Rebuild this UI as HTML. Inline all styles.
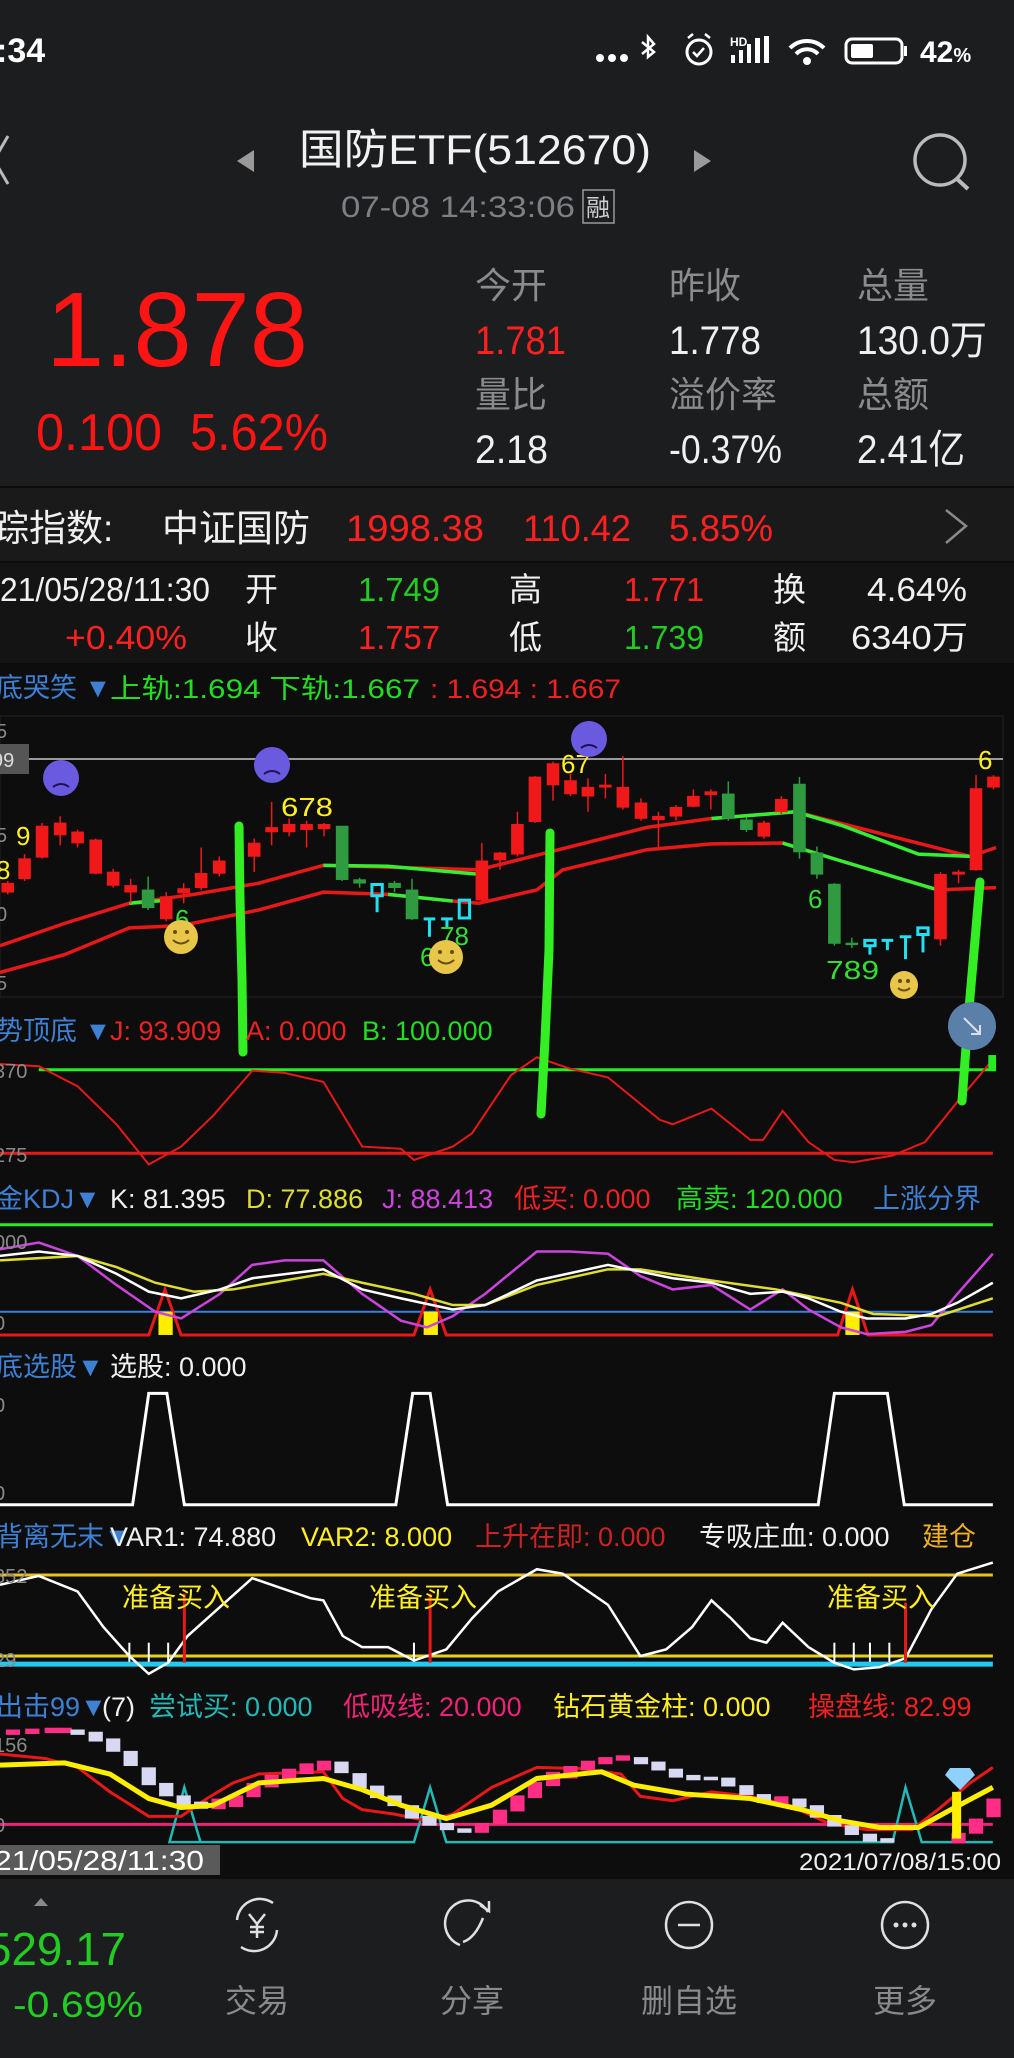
<!DOCTYPE html>
<html><head><meta charset="utf-8"><style>
html,body{margin:0;padding:0;background:#0d0d0d;}
svg{display:block;font-family:"Liberation Sans","Noto Sans CJK SC",sans-serif;}
.n{vector-effect:non-scaling-stroke;fill:none}
</style></head><body>
<svg width="1014" height="2058" viewBox="0 0 1014 2058" xmlns="http://www.w3.org/2000/svg">
<!-- backgrounds -->
<rect x="0" y="0" width="1014" height="488" fill="#1c1d1f"/>
<rect x="0" y="488" width="1014" height="74" fill="#1a1a1b"/>
<rect x="0" y="486" width="1014" height="2" fill="#0c0c0c"/>
<rect x="0" y="561" width="1014" height="2" fill="#0c0c0c"/>
<rect x="0" y="563" width="1014" height="100" fill="#141414"/>
<rect x="0" y="663" width="1014" height="1216" fill="#0d0d0d"/>
<rect x="0" y="1879" width="1014" height="179" fill="#1c1d1f"/>

<!-- status bar -->
<text x="-4" y="62" font-size="34" font-weight="bold" fill="#fff">:34</text>
<g fill="#fff"><circle cx="600" cy="58" r="4"/><circle cx="612" cy="58" r="4"/><circle cx="624" cy="58" r="4"/></g>
<path d="M642 42 L654 52 L648 57 L648 37 L654 44 L642 54" stroke="#fff" stroke-width="2.5" fill="none"/>
<circle cx="699" cy="52" r="12" stroke="#fff" stroke-width="3" fill="none"/>
<path d="M693 52 l4 4 l7-8 M688 38 l5-4 M710 38 l-5-4" stroke="#fff" stroke-width="2.5" fill="none"/>
<text x="730" y="46" font-size="12" font-weight="bold" fill="#fff">HD</text>
<g fill="#fff"><rect x="731" y="55" width="4" height="8"/><rect x="739" y="50" width="4" height="13"/><rect x="747" y="44" width="4" height="19"/><rect x="755" y="38" width="5" height="25"/><rect x="764" y="36" width="5" height="27"/></g>
<path d="M790 48 a24 24 0 0 1 34 0 M796 54 a15 15 0 0 1 22 0" stroke="#fff" stroke-width="4" fill="none"/>
<circle cx="807" cy="61" r="4" fill="#fff"/>
<rect x="846" y="39" width="56" height="24" rx="6" stroke="#fff" stroke-width="3" fill="none"/>
<rect x="851" y="44" width="22" height="14" rx="2" fill="#fff"/>
<rect x="904" y="46" width="3" height="10" fill="#fff"/>
<text x="920" y="62" font-size="30" font-weight="bold" fill="#fff">42<tspan font-size="20">%</tspan></text>

<!-- title -->
<path d="M8 136 L-6 160 L8 184" stroke="#bbb" stroke-width="3" fill="none"/>
<path d="M254 150 L237 161 L254 172 Z" fill="#9a9a9a"/>
<path d="M694 150 L711 161 L694 172 Z" fill="#9a9a9a"/>
<text x="299" y="164" font-size="42" fill="#f2f2f2" textLength="352" lengthAdjust="spacingAndGlyphs">国防ETF(512670)</text>
<circle cx="940" cy="160" r="25" stroke="#bbb" stroke-width="3.5" fill="none"/>
<path d="M956 178 L968 189" stroke="#bbb" stroke-width="4"/>
<text x="341" y="217" font-size="30" fill="#7c7f84" textLength="234" lengthAdjust="spacingAndGlyphs">07-08 14:33:06</text>
<rect x="583" y="190" width="31" height="33" fill="none" stroke="#9a9a9a" stroke-width="1.5"/>
<text x="586" y="216" font-size="24" fill="#cfcfcf">融</text>

<!-- price -->
<text x="46" y="366" font-size="106" fill="#ff1414" textLength="262" lengthAdjust="spacingAndGlyphs">1.878</text>
<text x="36" y="450" font-size="52" fill="#ff1414" textLength="126" lengthAdjust="spacingAndGlyphs">0.100</text>
<text x="190" y="450" font-size="52" fill="#ff1414" textLength="138" lengthAdjust="spacingAndGlyphs">5.62%</text>
<g font-size="36" fill="#8a8b8d">
<text x="475" y="298">今开</text><text x="669" y="298">昨收</text><text x="857" y="298">总量</text>
<text x="475" y="407">量比</text><text x="669" y="407">溢价率</text><text x="857" y="407">总额</text>
</g>
<g font-size="40">
<text x="475" y="354" fill="#ff2020" textLength="91" lengthAdjust="spacingAndGlyphs">1.781</text>
<text x="669" y="354" fill="#f0f0f0" textLength="92" lengthAdjust="spacingAndGlyphs">1.778</text>
<text x="857" y="354" fill="#f0f0f0" textLength="130" lengthAdjust="spacingAndGlyphs">130.0万</text>
<text x="475" y="463" fill="#f0f0f0" textLength="73" lengthAdjust="spacingAndGlyphs">2.18</text>
<text x="669" y="463" fill="#f0f0f0" textLength="113" lengthAdjust="spacingAndGlyphs">-0.37%</text>
<text x="857" y="463" fill="#f0f0f0" textLength="108" lengthAdjust="spacingAndGlyphs">2.41亿</text>
</g>

<!-- tracking row -->
<g font-size="37">
<text x="-8" y="541" fill="#f0f0f0">踪指数:</text>
<text x="162" y="541" fill="#f0f0f0">中证国防</text>
<text x="346" y="541" fill="#ff2020" textLength="138" lengthAdjust="spacingAndGlyphs">1998.38</text>
<text x="523" y="541" fill="#ff2020" textLength="108" lengthAdjust="spacingAndGlyphs">110.42</text>
<text x="669" y="541" fill="#ff2020" textLength="104" lengthAdjust="spacingAndGlyphs">5.85%</text>
</g>
<path d="M946 510 L966 526 L946 543" stroke="#8a8a8a" stroke-width="2.5" fill="none"/>

<!-- K info row -->
<g font-size="33">
<text x="0" y="601" fill="#f0f0f0" textLength="210" lengthAdjust="spacingAndGlyphs">21/05/28/11:30</text>
<text x="245" y="601" fill="#f0f0f0">开</text>
<text x="358" y="601" fill="#22cc22" textLength="82" lengthAdjust="spacingAndGlyphs">1.749</text>
<text x="509" y="601" fill="#f0f0f0">高</text>
<text x="624" y="601" fill="#ff2020" textLength="80" lengthAdjust="spacingAndGlyphs">1.771</text>
<text x="773" y="601" fill="#f0f0f0">换</text>
<text x="867" y="601" fill="#f0f0f0" textLength="100" lengthAdjust="spacingAndGlyphs">4.64%</text>
<text x="65" y="649" fill="#ff2020" textLength="122" lengthAdjust="spacingAndGlyphs">+0.40%</text>
<text x="245" y="649" fill="#f0f0f0">收</text>
<text x="358" y="649" fill="#ff2020" textLength="82" lengthAdjust="spacingAndGlyphs">1.757</text>
<text x="509" y="649" fill="#f0f0f0">低</text>
<text x="624" y="649" fill="#22cc22" textLength="80" lengthAdjust="spacingAndGlyphs">1.739</text>
<text x="773" y="649" fill="#f0f0f0">额</text>
<text x="851" y="649" fill="#f0f0f0" textLength="117" lengthAdjust="spacingAndGlyphs">6340万</text>
</g>

<!-- indicator 1 header -->
<g font-size="27">
<text x="-4" y="697" fill="#3d80d4">底哭笑 ▼</text>
<text x="110" y="698" fill="#22dd22" textLength="310" lengthAdjust="spacingAndGlyphs">上轨:1.694 下轨:1.667</text>
<text x="430" y="698" fill="#ee2222" textLength="191" lengthAdjust="spacingAndGlyphs">: 1.694 : 1.667</text>
</g>
<rect x="0" y="716" width="1003" height="281" fill="none" stroke="#222" stroke-width="1"/>
<line x1="0" y1="759" x2="1003" y2="759" stroke="#9a9a9a" stroke-width="2"/>
<rect x="0" y="744" width="29" height="30" fill="#555"/>
<g font-size="20" fill="#8a8a8a">
<text x="-4" y="738">5</text><text x="-4" y="842">5</text><text x="-4" y="921">0</text><text x="-4" y="990">5</text>
<text x="-8" y="767" fill="#ddd">99</text>
</g>
<!-- main chart (zoom2 coords) -->
<g transform="translate(0,660) scale(0.6468,0.4464)">
<g stroke-width="3.5">
<polyline class="n" stroke="#e81818" points="0,640 100,590 200,545 300,525 400,500 500,460 740,470 850,430 1000,375 1100,355 1230,340 1500,440 1540,420"/>
<polyline class="n" stroke="#e81818" points="0,700 100,660 200,600 280,595 400,560 500,520 600,525 700,540 740,545 830,515 870,470 1000,425 1100,412 1210,410 1300,450 1450,515 1540,510"/>
<polyline class="n" stroke="#33ee33" points="200,545 260,538"/>
<polyline class="n" stroke="#33ee33" points="500,460 600,462 700,475 740,480"/>
<polyline class="n" stroke="#33ee33" points="600,525 700,540"/>
<polyline class="n" stroke="#33ee33" points="1100,355 1230,340 1300,370 1420,435 1500,440"/>
<polyline class="n" stroke="#33ee33" points="1210,410 1300,450 1450,515"/>
</g>
<g stroke-width="1.5">
<!-- candles: x, bodyTop, bodyBot, wickTop, wickBot -->
<g fill="#f01818" stroke="#f01818">
<line class="n" x1="12" y1="495" x2="12" y2="525"/><rect x="3" y="500" width="18" height="20"/>
<line class="n" x1="38" y1="435" x2="38" y2="495"/><rect x="29" y="445" width="18" height="45"/>
<line class="n" x1="65" y1="365" x2="65" y2="445"/><rect x="56" y="372" width="18" height="70"/>
<line class="n" x1="93" y1="350" x2="93" y2="415"/><rect x="84" y="365" width="18" height="27"/>
<line class="n" x1="120" y1="380" x2="120" y2="420"/><rect x="111" y="385" width="18" height="25"/>
<line class="n" x1="148" y1="400" x2="148" y2="480"/><rect x="139" y="403" width="18" height="75"/>
<line class="n" x1="175" y1="468" x2="175" y2="510"/><rect x="166" y="475" width="18" height="30"/>
<line class="n" x1="202" y1="490" x2="202" y2="545"/><rect x="193" y="505" width="18" height="15"/>
<line class="n" x1="257" y1="520" x2="257" y2="585"/><rect x="248" y="530" width="18" height="50"/>
<line class="n" x1="284" y1="500" x2="284" y2="545"/><rect x="275" y="512" width="18" height="10"/>
<line class="n" x1="311" y1="420" x2="311" y2="515"/><rect x="302" y="478" width="18" height="32"/>
<line class="n" x1="339" y1="440" x2="339" y2="485"/><rect x="330" y="450" width="18" height="28"/>
<line class="n" x1="393" y1="400" x2="393" y2="475"/><rect x="384" y="410" width="18" height="30"/>
<line class="n" x1="420" y1="318" x2="420" y2="415"/><rect x="411" y="375" width="18" height="10"/>
<line class="n" x1="447" y1="355" x2="447" y2="395"/><rect x="438" y="368" width="18" height="17"/>
<line class="n" x1="474" y1="360" x2="474" y2="420"/><rect x="465" y="368" width="18" height="12"/>
<line class="n" x1="501" y1="365" x2="501" y2="395"/><rect x="492" y="368" width="18" height="10"/>
<line class="n" x1="745" y1="410" x2="745" y2="540"/><rect x="736" y="450" width="18" height="88"/>
<line class="n" x1="773" y1="430" x2="773" y2="470"/><rect x="764" y="432" width="18" height="16"/>
<line class="n" x1="800" y1="340" x2="800" y2="440"/><rect x="791" y="368" width="18" height="67"/>
<line class="n" x1="827" y1="260" x2="827" y2="365"/><rect x="818" y="262" width="18" height="100"/>
<line class="n" x1="855" y1="228" x2="855" y2="315"/><rect x="846" y="232" width="18" height="48"/>
<line class="n" x1="882" y1="255" x2="882" y2="305"/><rect x="873" y="270" width="18" height="30"/>
<line class="n" x1="909" y1="265" x2="909" y2="340"/><rect x="900" y="285" width="18" height="20"/>
<line class="n" x1="936" y1="255" x2="936" y2="310"/><rect x="927" y="280" width="18" height="5"/>
<line class="n" x1="963" y1="215" x2="963" y2="335"/><rect x="954" y="285" width="18" height="45"/>
<line class="n" x1="991" y1="310" x2="991" y2="360"/><rect x="982" y="320" width="18" height="35"/>
<line class="n" x1="1018" y1="340" x2="1018" y2="420"/><rect x="1009" y="350" width="18" height="8"/>
<line class="n" x1="1045" y1="325" x2="1045" y2="360"/><rect x="1036" y="330" width="18" height="20"/>
<line class="n" x1="1072" y1="290" x2="1072" y2="330"/><rect x="1063" y="305" width="18" height="23"/>
<line class="n" x1="1099" y1="290" x2="1099" y2="335"/><rect x="1090" y="295" width="18" height="7"/>
<line class="n" x1="1181" y1="360" x2="1181" y2="400"/><rect x="1172" y="365" width="18" height="30"/>
<line class="n" x1="1208" y1="305" x2="1208" y2="345"/><rect x="1199" y="312" width="18" height="28"/>
<line class="n" x1="1454" y1="475" x2="1454" y2="640"/><rect x="1445" y="480" width="18" height="145"/>
<line class="n" x1="1482" y1="470" x2="1482" y2="500"/><rect x="1473" y="475" width="18" height="5"/>
<line class="n" x1="1509" y1="258" x2="1509" y2="472"/><rect x="1500" y="288" width="18" height="182"/>
<line class="n" x1="1536" y1="258" x2="1536" y2="290"/><rect x="1527" y="262" width="18" height="23"/>
</g>
<g fill="#2f9a3f" stroke="#2f9a3f">
<line class="n" x1="229" y1="485" x2="229" y2="560"/><rect x="220" y="515" width="18" height="40"/>
<line class="n" x1="529" y1="372" x2="529" y2="495"/><rect x="520" y="372" width="18" height="120"/>
<line class="n" x1="556" y1="488" x2="556" y2="510"/><rect x="547" y="492" width="18" height="8"/>
<line class="n" x1="610" y1="495" x2="610" y2="520"/><rect x="601" y="500" width="18" height="10"/>
<line class="n" x1="637" y1="490" x2="637" y2="582"/><rect x="628" y="515" width="18" height="65"/>
<line class="n" x1="1126" y1="272" x2="1126" y2="360"/><rect x="1117" y="300" width="18" height="55"/>
<line class="n" x1="1154" y1="352" x2="1154" y2="385"/><rect x="1145" y="358" width="18" height="22"/>
<line class="n" x1="1236" y1="262" x2="1236" y2="445"/><rect x="1227" y="278" width="18" height="152"/>
<line class="n" x1="1263" y1="418" x2="1263" y2="490"/><rect x="1254" y="432" width="18" height="48"/>
<line class="n" x1="1290" y1="500" x2="1290" y2="640"/><rect x="1281" y="502" width="18" height="133"/>
<line class="n" x1="1317" y1="622" x2="1317" y2="645"/><rect x="1308" y="634" width="18" height="4"/>
</g>
<g stroke="#22e0f0" fill="none" stroke-width="3">
<line class="n" x1="583" y1="528" x2="583" y2="565"/><rect class="n" x="575" y="503" width="16" height="25"/>
<line class="n" x1="664" y1="578" x2="664" y2="620"/><line class="n" x1="655" y1="580" x2="673" y2="580"/>
<line class="n" x1="691" y1="580" x2="691" y2="600"/><line class="n" x1="682" y1="580" x2="700" y2="580"/>
<rect class="n" x="710" y="538" width="16" height="40"/>
<line class="n" x1="1345" y1="640" x2="1345" y2="660"/><rect class="n" x="1337" y="628" width="16" height="12"/>
<line class="n" x1="1372" y1="628" x2="1372" y2="650"/><line class="n" x1="1363" y1="628" x2="1381" y2="628"/>
<line class="n" x1="1400" y1="620" x2="1400" y2="670"/><line class="n" x1="1391" y1="620" x2="1409" y2="620"/>
<line class="n" x1="1427" y1="615" x2="1427" y2="655"/><rect class="n" x="1419" y="600" width="16" height="15"/>
</g>
</g>
<!-- J line chart2 -->
<line class="n" x1="60" y1="918" x2="1540" y2="918" stroke="#22ee22" stroke-width="3"/>
<line class="n" x1="0" y1="1105" x2="1535" y2="1105" stroke="#e81818" stroke-width="3"/>
<polyline class="n" stroke="#e81818" stroke-width="2" points="0,905 60,910 120,955 180,1040 230,1130 280,1090 330,1020 390,920 440,925 500,945 560,1090 620,1095 640,1120 700,1090 730,1060 790,930 830,890 880,915 940,935 1020,1030 1040,1040 1100,1005 1160,1075 1180,1075 1210,1010 1250,1080 1290,1120 1320,1125 1380,1110 1430,1080 1480,990 1535,895"/>
<rect x="1528" y="885" width="12" height="35" fill="#22ee22"/>
<!-- KDJ -->
<line class="n" x1="0" y1="1265" x2="1535" y2="1265" stroke="#22ee22" stroke-width="3"/>
<line class="n" x1="0" y1="1460" x2="1535" y2="1460" stroke="#3a7fe0" stroke-width="2"/>
<polyline class="n" stroke="#e81818" stroke-width="3" points="0,1512 230,1512 255,1410 280,1512 640,1512 665,1410 690,1512 1295,1512 1318,1410 1342,1512 1535,1512"/>
<g fill="#ffee00"><rect x="245" y="1460" width="22" height="52"/><rect x="655" y="1460" width="22" height="52"/><rect x="1307" y="1460" width="22" height="52"/></g>
<polyline class="n" stroke="#cc44dd" stroke-width="2.5" points="0,1320 60,1305 120,1335 180,1400 240,1460 280,1475 340,1420 390,1355 440,1345 500,1345 560,1420 620,1480 660,1495 700,1470 750,1420 830,1325 880,1325 940,1330 990,1380 1040,1410 1100,1400 1160,1455 1210,1410 1250,1455 1300,1495 1340,1510 1400,1505 1440,1490 1480,1420 1535,1330"/>
<polyline class="n" stroke="#dddd33" stroke-width="2.5" points="0,1345 120,1335 180,1360 240,1395 300,1415 360,1410 440,1390 500,1375 560,1395 640,1420 700,1445 750,1445 830,1400 940,1365 990,1365 1100,1390 1200,1410 1300,1440 1350,1465 1450,1470 1535,1430"/>
<polyline class="n" stroke="#ffffff" stroke-width="2.5" points="0,1335 60,1325 120,1335 180,1375 230,1415 280,1430 340,1410 390,1385 500,1365 560,1410 620,1430 700,1455 750,1445 830,1390 940,1355 990,1370 1040,1385 1100,1395 1160,1420 1210,1415 1250,1430 1300,1460 1340,1475 1400,1475 1440,1465 1480,1440 1535,1395"/>
</g>
<!-- hand-drawn green strokes -->
<g stroke="#33ee22" stroke-width="9" stroke-linecap="round" fill="none">
<path d="M239 826 L240 900 L242 980 L243 1052"/>
<path d="M550 833 L549 950 L545 1040 L541 1114"/>
<path d="M980 882 L975 940 L968 1020 L962 1101"/>
</g>
<!-- chart1 labels and faces -->
<g font-size="26" fill="#ffee22">
<text x="16" y="845">9</text><text x="-4" y="879">8</text>
<text x="281" y="816" textLength="52" lengthAdjust="spacingAndGlyphs">678</text>
<text x="561" y="773">67</text><text x="978" y="769">6</text>
</g>
<g font-size="26" fill="#33dd33">
<text x="175" y="928">6</text><text x="440" y="945">78</text><text x="420" y="966">6</text>
<text x="808" y="908">6</text><text x="826" y="979" textLength="53" lengthAdjust="spacingAndGlyphs">789</text>
</g>
<g>
<circle cx="181" cy="937" r="17" fill="#e8c64a"/><circle cx="446" cy="957" r="17" fill="#e8c64a"/><circle cx="904" cy="985" r="14" fill="#e8c64a"/>
<g stroke="#6b4a10" stroke-width="2" fill="none"><path d="M173 940 q8 7 16 0"/><path d="M438 960 q8 7 16 0"/><path d="M898 988 q6 5 12 0"/></g>
<g fill="#6b4a10"><circle cx="175" cy="932" r="2"/><circle cx="187" cy="932" r="2"/><circle cx="440" cy="952" r="2"/><circle cx="452" cy="952" r="2"/><circle cx="900" cy="981" r="2"/><circle cx="908" cy="981" r="2"/></g>
<circle cx="61" cy="778" r="18" fill="#6a5adf"/><circle cx="272" cy="765" r="18" fill="#6a5adf"/><circle cx="589" cy="739" r="18" fill="#6a5adf"/>
<g stroke="#201050" stroke-width="2" fill="none"><path d="M53 787 q8 -6 16 0"/><path d="M264 774 q8 -6 16 0"/><path d="M581 748 q8 -6 16 0"/></g>
</g>
<circle cx="972" cy="1026" r="24" fill="#5a80aa"/>
<path d="M964 1018 L980 1034 M980 1025 L980 1034 L971 1034" stroke="#dde" stroke-width="2" fill="none"/>

<!-- indicator 2 -->
<g font-size="27">
<text x="-4" y="1040" fill="#3d80d4">势顶底 ▼</text>
<text x="110" y="1040" fill="#ee2222">J: 93.909</text>
<text x="246" y="1040" fill="#ee2222">A: 0.000</text>
<text x="362" y="1040" fill="#22dd22">B: 100.000</text>
</g>
<g font-size="20" fill="#8a8a8a"><text x="-6" y="1078">370</text><text x="-6" y="1162">275</text><text x="-6" y="1249">000</text><text x="-6" y="1330">0</text></g>
<g font-size="27">
<text x="-4" y="1208" fill="#3d80d4">金KDJ▼</text>
<text x="110" y="1208" fill="#f0f0f0">K: 81.395</text>
<text x="246" y="1208" fill="#dddd33">D: 77.886</text>
<text x="382" y="1208" fill="#cc44dd">J: 88.413</text>
<text x="514" y="1208" fill="#ee2222">低买: 0.000</text>
<text x="676" y="1208" fill="#22dd22">高卖: 120.000</text>
<text x="873" y="1208" fill="#3d80d4">上涨分界</text>
</g>
<g font-size="27">
<text x="-4" y="1376" fill="#3d80d4">底选股▼</text>
<text x="110" y="1376" fill="#f0f0f0">选股: 0.000</text>
</g>
<g transform="translate(0,1360) scale(0.6468,0.4452)">
<polyline class="n" stroke="#fff" stroke-width="3" points="0,325 205,325 230,75 258,75 285,325 612,325 638,75 665,75 692,325 1265,325 1290,75 1372,75 1398,325 1535,325"/>
<line class="n" x1="0" y1="483" x2="1535" y2="483" stroke="#e8c020" stroke-width="3"/>
<line class="n" x1="0" y1="665" x2="1535" y2="665" stroke="#e8d020" stroke-width="3"/>
<line class="n" x1="0" y1="683" x2="1535" y2="683" stroke="#22c8f0" stroke-width="5"/>
<polyline class="n" stroke="#fff" stroke-width="2.5" points="0,505 60,485 120,520 160,600 200,665 230,705 260,680 290,620 340,555 390,490 430,510 480,535 500,540 530,620 560,645 600,645 640,675 690,650 730,580 770,520 830,470 870,480 910,520 940,550 990,665 1030,650 1070,600 1100,540 1130,580 1160,625 1185,635 1210,590 1250,645 1290,680 1320,695 1360,690 1400,670 1440,560 1480,480 1535,455"/>
<g stroke="#e81818" stroke-width="3"><line class="n" x1="285" y1="525" x2="285" y2="680"/><line class="n" x1="665" y1="525" x2="665" y2="680"/><line class="n" x1="1400" y1="545" x2="1400" y2="680"/></g>
<g stroke="#fff" stroke-width="2"><line class="n" x1="200" y1="635" x2="200" y2="678"/><line class="n" x1="230" y1="635" x2="230" y2="678"/><line class="n" x1="260" y1="635" x2="260" y2="678"/><line class="n" x1="640" y1="635" x2="640" y2="678"/><line class="n" x1="1290" y1="635" x2="1290" y2="678"/><line class="n" x1="1320" y1="635" x2="1320" y2="678"/><line class="n" x1="1345" y1="635" x2="1345" y2="678"/><line class="n" x1="1375" y1="635" x2="1375" y2="678"/></g>
<!-- chart6 -->
<line class="n" x1="0" y1="1043" x2="1535" y2="1043" stroke="#ee2277" stroke-width="3"/>
<polyline class="n" stroke="#22b8b8" stroke-width="2.5" points="340,1083 262,1083 285,960 310,1083 640,1083 665,960 690,1083 1380,1083 1400,960 1425,1083 1535,1083"/>
<polyline class="n" stroke="#e81818" stroke-width="3" points="0,885 70,895 120,915 170,970 230,1025 280,1025 320,985 360,950 400,930 500,925 530,985 560,1010 610,1020 660,1035 700,1020 760,960 830,915 900,918 960,930 990,980 1040,990 1100,970 1160,980 1220,1000 1280,1040 1340,1055 1410,1055 1450,1010 1500,950 1535,915"/>
<g fill="#ff2d84">
<rect x="9" y="830" width="22" height="12"/><rect x="39" y="828" width="22" height="12"/><rect x="69" y="826" width="22" height="12"/><rect x="89" y="826" width="22" height="12"/>
<rect x="327" y="985" width="22" height="24"/><rect x="354" y="978" width="22" height="26"/><rect x="381" y="950" width="22" height="32"/><rect x="409" y="932" width="22" height="28"/><rect x="436" y="918" width="22" height="26"/><rect x="463" y="906" width="22" height="24"/><rect x="490" y="900" width="22" height="22"/>
<rect x="734" y="1040" width="22" height="22"/><rect x="762" y="1010" width="22" height="32"/><rect x="789" y="978" width="22" height="36"/><rect x="816" y="948" width="22" height="36"/><rect x="844" y="925" width="22" height="32"/><rect x="871" y="912" width="22" height="28"/><rect x="898" y="900" width="22" height="22"/><rect x="925" y="892" width="22" height="16"/><rect x="952" y="888" width="22" height="12"/>
<rect x="1197" y="980" width="22" height="18"/>
<rect x="1471" y="1062" width="22" height="24"/><rect x="1498" y="1030" width="22" height="34"/><rect x="1525" y="985" width="22" height="42"/>
</g>
<g fill="#d8d8f2">
<rect x="109" y="830" width="22" height="12"/><rect x="137" y="835" width="22" height="22"/><rect x="164" y="850" width="22" height="30"/><rect x="191" y="878" width="22" height="34"/><rect x="219" y="915" width="22" height="40"/><rect x="246" y="950" width="22" height="30"/><rect x="273" y="978" width="22" height="24"/><rect x="300" y="992" width="22" height="16"/>
<rect x="517" y="902" width="22" height="26"/><rect x="545" y="928" width="22" height="34"/><rect x="572" y="956" width="22" height="28"/><rect x="599" y="978" width="22" height="24"/><rect x="626" y="1000" width="22" height="30"/><rect x="653" y="1024" width="22" height="22"/><rect x="680" y="1040" width="22" height="16"/><rect x="707" y="1052" width="22" height="10"/>
<rect x="980" y="892" width="22" height="16"/><rect x="1007" y="902" width="22" height="20"/><rect x="1034" y="918" width="22" height="20"/><rect x="1061" y="932" width="22" height="12"/><rect x="1088" y="936" width="22" height="8"/><rect x="1115" y="938" width="22" height="20"/><rect x="1143" y="955" width="22" height="22"/><rect x="1170" y="975" width="22" height="20"/>
<rect x="1225" y="985" width="22" height="20"/><rect x="1252" y="1000" width="22" height="28"/><rect x="1279" y="1022" width="22" height="26"/><rect x="1306" y="1045" width="22" height="22"/><rect x="1334" y="1064" width="22" height="18"/><rect x="1361" y="1074" width="22" height="10"/>
</g>
<polyline class="n" stroke="#ffee00" stroke-width="5" points="0,910 100,905 170,930 230,985 280,1005 330,1000 400,950 500,940 560,965 620,1000 690,1030 760,1000 830,940 930,925 980,955 1060,975 1160,985 1240,1010 1300,1035 1360,1050 1420,1050 1470,1010 1535,960"/>
<rect x="1472" y="970" width="14" height="105" fill="#ffee00"/>
</g>
<path d="M950 1768 L970 1768 L975 1775 L960 1790 L945 1775 Z" fill="#8fd0ff"/>

<!-- indicator 5,6 headers -->
<g font-size="27">
<text x="-4" y="1546" fill="#3d80d4">背离无末▼</text>
<text x="110" y="1546" fill="#f0f0f0">VAR1: 74.880</text>
<text x="301" y="1546" fill="#ffee22">VAR2: 8.000</text>
<text x="475" y="1546" fill="#cc2222">上升在即: 0.000</text>
<text x="699" y="1546" fill="#f0f0f0">专吸庄血: 0.000</text>
<text x="922" y="1546" fill="#f0b020">建仓</text>
</g>
<g font-size="27" fill="#ffee22"><text x="122" y="1607">准备买入</text><text x="369" y="1607">准备买入</text><text x="827" y="1607">准备买入</text></g>
<g font-size="20" fill="#8a8a8a"><text x="-6" y="1412">0</text><text x="-6" y="1500">0</text><text x="-6" y="1583">352</text><text x="-6" y="1667">29</text><text x="-6" y="1752">156</text><text x="-6" y="1832">0</text></g>
<g font-size="27">
<text x="-4" y="1716" fill="#3d80d4">出击99▼</text>
<text x="102" y="1716" fill="#f0f0f0">(7)</text>
<text x="149" y="1716" fill="#22b8b8">尝试买: 0.000</text>
<text x="343" y="1716" fill="#ee2277">低吸线: 20.000</text>
<text x="553" y="1716" fill="#ffee22">钻石黄金柱: 0.000</text>
<text x="808" y="1716" fill="#ee2222">操盘线: 82.99</text>
</g>
<rect x="0" y="1845" width="220" height="30" fill="#5a5a5a"/>
<text x="-6" y="1870" font-size="28" fill="#fff" textLength="210" lengthAdjust="spacingAndGlyphs">21/05/28/11:30</text>
<text x="799" y="1870" font-size="24" fill="#eee" textLength="202" lengthAdjust="spacingAndGlyphs">2021/07/08/15:00</text>

<!-- bottom nav -->
<path d="M34 1906 L41 1898 L48 1906 Z" fill="#8a8a8a"/>
<text x="-14" y="1965" font-size="46" fill="#22cc22" textLength="140" lengthAdjust="spacingAndGlyphs">529.17</text>
<text x="13" y="2017" font-size="36" fill="#22cc22" textLength="130" lengthAdjust="spacingAndGlyphs">-0.69%</text>
<g stroke="#e0e0e0" stroke-width="2.5" fill="none">
<path d="M237 1920 a23 23 0 0 1 36 -17 M277 1930 a23 23 0 0 1 -36 17"/>
<path d="M249 1914 l8 10 l8 -10 M257 1924 v14 M250 1927 h14 M250 1932 h14"/>
<path d="M460 1945 a23 23 0 1 1 28 -33 M480 1905 l9 6 l0 -10"/>
<path d="M463 1942 q12 -4 20 -24"/>
<circle cx="689" cy="1925" r="23"/><path d="M678 1925 h22"/>
<circle cx="905" cy="1925" r="23"/>
</g>
<g fill="#e0e0e0"><circle cx="896" cy="1925" r="2.5"/><circle cx="905" cy="1925" r="2.5"/><circle cx="914" cy="1925" r="2.5"/></g>
<g font-size="32" fill="#8a8a8c" text-anchor="middle">
<text x="257" y="2012">交易</text><text x="472" y="2012">分享</text><text x="689" y="2012">删自选</text><text x="905" y="2012">更多</text>
</g>
</svg>
</body></html>
